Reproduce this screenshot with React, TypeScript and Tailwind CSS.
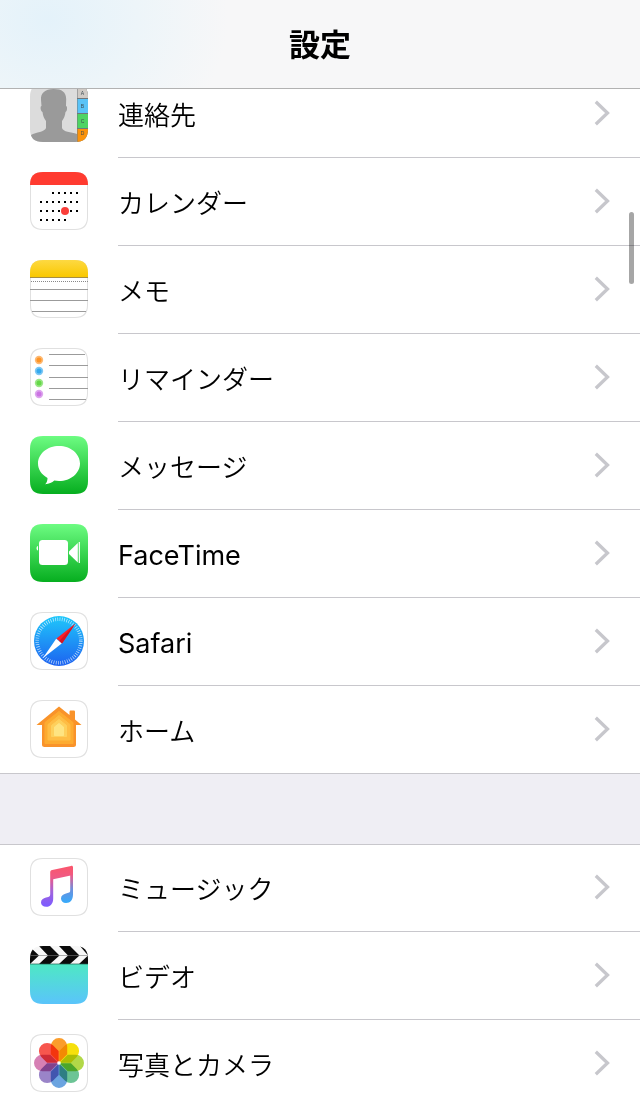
import type { ReactNode } from "react";

type Item = { label: string; href: string; icon: ReactNode };

const TILE = "M13 0H45C54 0 58 4 58 13V45C58 54 54 58 45 58H13C4 58 0 54 0 45V13C0 4 4 0 13 0Z";

function Tile({ id, outlined, children }: { id: string; outlined?: boolean; children: ReactNode }) {
  return (
    <svg viewBox="0 0 58 58" className="size-[58px] shrink-0" aria-hidden="true">
      <defs>
        <clipPath id={`${id}-clip`}>
          <path d={TILE} />
        </clipPath>
      </defs>
      <g clipPath={`url(#${id}-clip)`}>
        <rect width="58" height="58" fill="#fff" />
        {outlined && <path d={TILE} fill="none" stroke="#e0e0e0" strokeWidth="2" />}
        {children}
      </g>
    </svg>
  );
}

function ContactsIcon() {
  const tabs = [
    { y: 0, h: 14, fill: "#cfcac5", letter: "A", ty: 11 },
    { y: 15, h: 14, fill: "#5ac3f7", letter: "B", ty: 24 },
    { y: 30, h: 14, fill: "#4fd463", letter: "C", ty: 39 },
    { y: 45, h: 13, fill: "#fb930c", letter: "D", ty: 51 },
  ];
  return (
    <Tile id="contacts">
      <rect width="58" height="58" fill="#dcdcdc" />
      <path
        d="M23.500 5C15 5 10.500 9 11 16L11.500 22C10 22 10.500 27 12.500 28C13 32 14 34 16 37V44C15 48 6 48 1 51V58H47V50C41 48 33 48 32 44V37C34 34 35 32 35.500 28C37.500 27 37.500 22 36 22L36.200 15C36 8 32 5 23.500 5Z"
        fill="#9a9a9a"
      />
      <rect x="47" width="11" height="58" fill="#70767a" />
      {tabs.map((t) => (
        <g key={t.letter}>
          <rect x="47.500" y={t.y} width="11" height={t.h} fill={t.fill} />
          <text x="52.500" y={t.ty} fontSize="5" textAnchor="middle" fill="#3d4b52" className="font-['Liberation_Sans',sans-serif]">
            {t.letter}
          </text>
        </g>
      ))}
    </Tile>
  );
}

function CalendarIcon() {
  const rows = [
    { y: 21, xs: [23, 29, 35, 41, 47] },
    { y: 30, xs: [11, 17, 23, 29, 35, 41, 47] },
    { y: 39, xs: [11, 17, 23, 29, 35, 41, 47] },
    { y: 48, xs: [11, 17, 23, 29, 35] },
  ];
  return (
    <Tile id="calendar" outlined>
      <rect width="58" height="13" fill="#ff3b30" />
      {rows.map((r) => r.xs.map((x) => <rect key={`${x}-${r.y}`} x={x - 1} y={r.y - 1} width="2" height="2" fill="#000" />))}
      <circle cx="35" cy="39" r="4" fill="#fa3e3a" />
    </Tile>
  );
}

function NotesIcon() {
  return (
    <Tile id="notes" outlined>
      <defs>
        <linearGradient id="notes-top" x1="0" y1="0" x2="0" y2="1">
          <stop offset="0" stopColor="#fdd942" />
          <stop offset="1" stopColor="#fac800" />
        </linearGradient>
      </defs>
      <rect width="58" height="17" fill="url(#notes-top)" />
      <path d="M0 17.500H58" stroke="#a58e45" />
      <path d="M1 21.500H58" stroke="#888" strokeDasharray="1 1" />
      <path d="M0 29.500H58M0 40.500H58M2 51.500H56" stroke="#9b9b9b" />
    </Tile>
  );
}

function RemindersIcon() {
  const dots = [
    { y: 12, fill: "#fd9426" },
    { y: 23, fill: "#35a9ee" },
    { y: 35, fill: "#65d848" },
    { y: 46, fill: "#cb74e3" },
  ];
  return (
    <Tile id="reminders" outlined>
      {dots.map((d) => (
        <g key={d.y} fill={d.fill}>
          <circle cx="9" cy={d.y} r="4.200" opacity="0.65" />
          <circle cx="9" cy={d.y} r="2.500" />
        </g>
      ))}
      <path d="M19 6.500H55M19 17.500H58M19 29.500H58M19 40.500H58M19 51.500H56" stroke="#9b9b9b" />
    </Tile>
  );
}

function GreenTile({ id, children }: { id: string; children: ReactNode }) {
  return (
    <Tile id={id}>
      <defs>
        <linearGradient id={`${id}-green`} x1="0" y1="0" x2="0" y2="1">
          <stop offset="0" stopColor="#6dfc82" />
          <stop offset="1" stopColor="#06ae1f" />
        </linearGradient>
      </defs>
      <rect width="58" height="58" fill={`url(#${id}-green)`} />
      {children}
    </Tile>
  );
}

function MessagesIcon() {
  return (
    <GreenTile id="messages">
      <path
        d="M29 10C17.400 10 8 17.800 8 27.500C8 33.500 11.500 38.500 17.500 42C17.500 44.500 16.800 46.500 15.200 48.300C19 48 22 46.600 24.300 44.600C25.800 44.900 27.400 45 29 45C40.600 45 50 37.200 50 27.500S40.600 10 29 10Z"
        fill="#fff"
      />
    </GreenTile>
  );
}

function FaceTimeIcon() {
  return (
    <GreenTile id="facetime">
      <g fill="#fff">
        <rect x="9" y="16" width="29" height="25" rx="3.500" />
        <path d="M39 27.500L47.800 19V38.500L39 30Z" />
        <rect x="48.700" y="18" width="1.200" height="21" />
        <path d="M8 22V26.500C6 26.500 6 22 8 22Z" />
      </g>
    </GreenTile>
  );
}

function SafariIcon() {
  return (
    <Tile id="safari" outlined>
      <defs>
        <linearGradient id="safari-sky" x1="0" y1="0" x2="0" y2="1">
          <stop offset="0" stopColor="#1fc8fb" />
          <stop offset="1" stopColor="#1d62f0" />
        </linearGradient>
      </defs>
      <circle cx="29" cy="29" r="25" fill="url(#safari-sky)" />
      <circle cx="29" cy="29" r="21.800" fill="none" stroke="#fff" strokeWidth="3.600" strokeDasharray="0.700 1.583" opacity="0.75" />
      <path d="M45.500 11.500L26.500 26.500L32 31.500Z" fill="#fb1f28" />
      <path d="M45.500 11.500L29.200 29L32 31.500Z" fill="#d41623" />
      <path d="M12.800 46.200L26.200 26.700L31.700 31.500Z" fill="#fff" />
    </Tile>
  );
}

function HomeIcon() {
  return (
    <Tile id="home" outlined>
      <g strokeLinejoin="round">
        <path d="M29 6.500L39.500 15V12C39.500 11 40 10.600 41 10.600H43.500C44.500 10.600 45 11 45 12V19.500L51.500 25H46V44.500C46 46.300 45 47 43.500 47H14.500C13 47 12 46.300 12 44.500V25H6.500Z" fill="#f9932a" />
        <path d="M29 11.500L43 22.500V43.500H15V22.500Z" fill="#fdab30" stroke="#fdab30" />
        <path d="M29 15.500L40 24.500V40H18V24.500Z" fill="#febd45" stroke="#febd45" />
        <path d="M29 19.500L36.500 25.500V36.500H21.500V25.500Z" fill="#fed05c" stroke="#fed05c" />
        <path d="M29 23.500L33.500 27V35.500H24.500V27Z" fill="#fee482" stroke="#fee482" />
      </g>
    </Tile>
  );
}

function MusicIcon() {
  return (
    <Tile id="music" outlined>
      <defs>
        <linearGradient id="music-note" gradientUnits="userSpaceOnUse" x1="30" y1="7" x2="30" y2="48">
          <stop offset="0" stopColor="#fc5568" />
          <stop offset="0.300" stopColor="#ef5a85" />
          <stop offset="0.650" stopColor="#a163dc" />
          <stop offset="1" stopColor="#7d5cff" />
        </linearGradient>
        <linearGradient id="music-right" gradientUnits="userSpaceOnUse" x1="40" y1="7" x2="40" y2="45">
          <stop offset="0" stopColor="#fc5568" />
          <stop offset="0.300" stopColor="#e35f92" />
          <stop offset="0.650" stopColor="#6c90dd" />
          <stop offset="1" stopColor="#35abfc" />
        </linearGradient>
      </defs>
      <path
        d="M43 9V36.500C43 41.500 40.500 45 36 45C33 45 31 43 31 40.500C31 37.500 33.200 36 36 35.400L38.300 34.800C39.800 34.400 40.200 33.800 40.200 32V16L43 9Z"
        fill="url(#music-right)"
      />
      <path
        d="M20.200 14.500C20.200 13 20.800 12.300 22.200 12L41 7.900C42.300 7.600 43 8.200 43 9.500V17L23.200 21.200V40.500C23.200 45.500 20.500 48.800 16.200 48.800C13 48.800 11 47 11 44.500C11 41.500 13.200 40 16 39.400L18.300 38.900C19.700 38.500 20.200 37.800 20.200 36Z"
        fill="url(#music-note)"
      />
    </Tile>
  );
}

function VideosIcon() {
  return (
    <Tile id="videos">
      <defs>
        <linearGradient id="videos-sea" x1="0" y1="0" x2="0" y2="1">
          <stop offset="0" stopColor="#4ee8c4" />
          <stop offset="1" stopColor="#5ac4fb" />
        </linearGradient>
      </defs>
      <rect y="18" width="58" height="40" fill="url(#videos-sea)" />
      <rect width="58" height="18" fill="#f7f7f7" />
      <path
        d="M-9 0H-1L9 9.500L0 18H-11L-2 9.500ZM9 0H20L29.500 9.500L20 18H9L18 9.500ZM29 0H40L49.500 9.500L40 18H29L38 9.500ZM50 0H60V8L58 9.500ZM58 9.500V18H49Z"
        fill="#0b0b0b"
      />
      <path d="M0 9.500H58" stroke="#777" strokeWidth="0.600" />
      <path d="M0 18H58" stroke="#1d5a4c" strokeWidth="0.700" />
    </Tile>
  );
}

function PhotosIcon() {
  const petals = ["#fb9d2b", "#f6e00c", "#b2d848", "#6cc495", "#6ba4e0", "#9a84c8", "#d680b4", "#f7564e"];
  return (
    <Tile id="photos" outlined>
      <g className="isolate">
        {petals.map((fill, i) => (
          <path
            key={fill}
            d="M20.800 12.200A8.200 8.200 0 0 1 37.200 12.200V20.300L29 28.500L20.800 20.300Z"
            fill={fill}
            transform={`rotate(${i * 45} 29 29)`}
            className="mix-blend-multiply"
          />
        ))}
      </g>
      <circle cx="29" cy="29" r="1.800" fill="#fff" />
    </Tile>
  );
}

const apps: Item[] = [
  { label: "連絡先", href: "#contacts", icon: <ContactsIcon /> },
  { label: "カレンダー", href: "#calendar", icon: <CalendarIcon /> },
  { label: "メモ", href: "#notes", icon: <NotesIcon /> },
  { label: "リマインダー", href: "#reminders", icon: <RemindersIcon /> },
  { label: "メッセージ", href: "#messages", icon: <MessagesIcon /> },
  { label: "FaceTime", href: "#facetime", icon: <FaceTimeIcon /> },
  { label: "Safari", href: "#safari", icon: <SafariIcon /> },
  { label: "ホーム", href: "#home", icon: <HomeIcon /> },
];

const media: Item[] = [
  { label: "ミュージック", href: "#music", icon: <MusicIcon /> },
  { label: "ビデオ", href: "#videos", icon: <VideosIcon /> },
  { label: "写真とカメラ", href: "#photos", icon: <PhotosIcon /> },
];

function Row({ item, last }: { item: Item; last: boolean }) {
  const latin = /^[A-Za-z]/.test(item.label);
  return (
    <li className={last ? "border-b border-[#c8c7cc]" : ""}>
      <a href={item.href} className="flex items-stretch gap-[30px] pl-[30px]">
        <span className="pt-3.5">{item.icon}</span>
        <span className={`flex h-[88px] grow items-center justify-between pr-[30px] ${last ? "-mb-px" : "border-b border-[#c8c7cc]"}`}>
          <span className={latin ? "pt-1 text-[27px] leading-10" : "pt-1 text-[26px] leading-10 font-[350]"}>{item.label}</span>
          <svg viewBox="0 0 16 26" className="mb-0.5 h-[26px] w-4" fill="none" stroke="#c7c7cc" strokeWidth="3.300" aria-hidden="true">
            <path d="M1.800 1.800L13.500 13L1.800 24.200" />
          </svg>
        </span>
      </a>
    </li>
  );
}

function Group({ items, className }: { items: Item[]; className: string }) {
  return (
    <ul className={className}>
      {items.map((item, i) => (
        <Row key={item.href} item={item} last={i === items.length - 1} />
      ))}
    </ul>
  );
}

export default function App() {
  return (
    <div className="relative flex h-screen flex-col overflow-hidden bg-white font-['Inter','Noto_Sans_CJK_JP',sans-serif] text-black">
      <header className="flex h-[89px] shrink-0 items-center justify-center border-b border-[#b2b2b2] bg-[#f7f7f8] bg-[radial-gradient(ellipse_180px_150px_at_48px_20px,#e4f2fa_0%,#edf5f9_50%,#f7f7f8_100%)]">
        <h1 className="pt-0.5 text-[31px] leading-10 font-bold">設定</h1>
      </header>
      <main className="min-h-0 grow overflow-y-auto [scrollbar-width:none]">
        <Group items={apps} className="-mt-[19px]" />
        <div className="h-[71px] border-b border-[#c8c7cc] bg-[#efeef4]" />
        <Group items={media} className="-mt-px" />
      </main>
      <div className="absolute top-[212px] right-1.5 h-[72px] w-[5px] rounded-full bg-black/35" />
    </div>
  );
}
